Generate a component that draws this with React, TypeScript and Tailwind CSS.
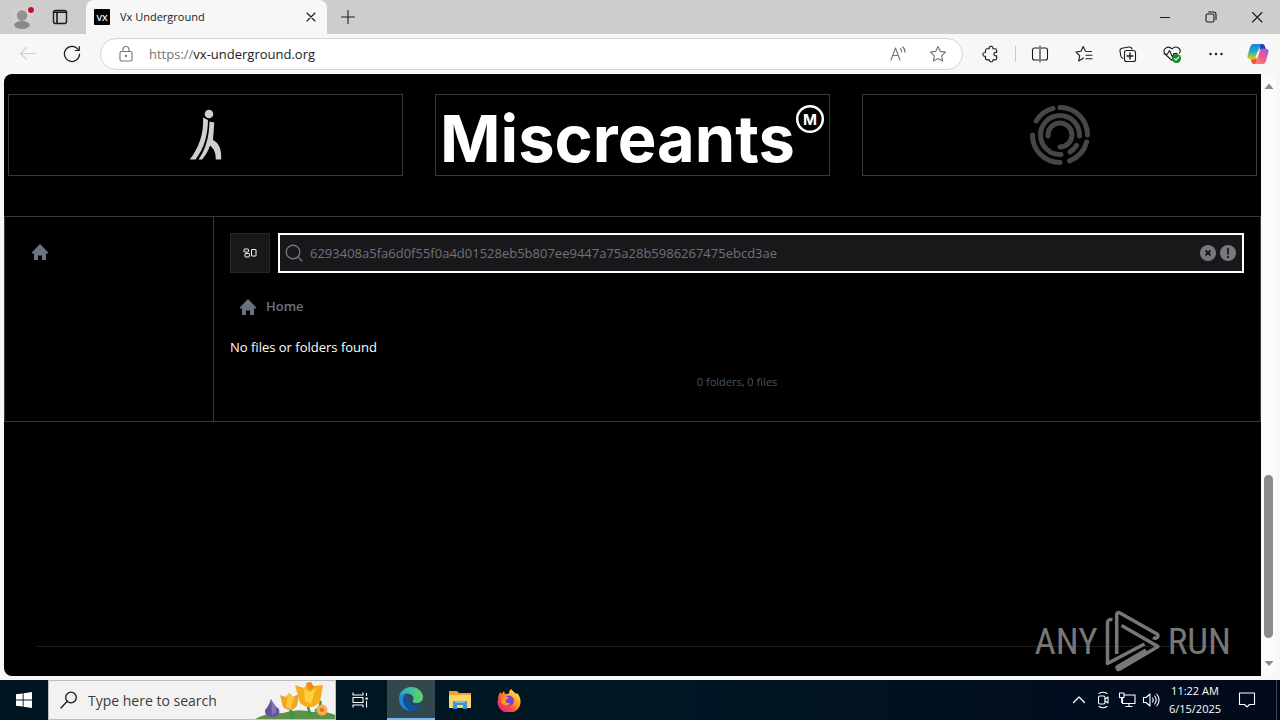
import type { ReactNode } from 'react';

type IconProps = { children: ReactNode; className?: string };

/* Base for the thin outline icons of the browser and the taskbar */
function Icon({ children, className = 'size-5' }: IconProps) {
  return (
    <svg
      viewBox="0 0 20 20"
      fill="none"
      stroke="currentColor"
      strokeWidth="1.1"
      strokeLinecap="round"
      strokeLinejoin="round"
      className={`shrink-0 ${className}`}
      aria-hidden
    >
      {children}
    </svg>
  );
}

function HomeIcon() {
  return (
    <svg viewBox="0 0 16 16" className="size-4 shrink-0 fill-gray-500" aria-hidden>
      <path d="M8 0 0 8.2V9.500h2V16h4v-4.600h4V16h4V9.500h2V8.200z" />
    </svg>
  );
}

const STAR = 'm10 2.5 2.3 4.9 5.2.7-3.8 3.7.9 5.3L10 14.6l-4.6 2.5.9-5.3-3.8-3.7 5.2-.7z';

/* ── Browser ─────────────────────────────────────────────────────────────── */

function TabStrip() {
  return (
    <header className="flex h-[34px] shrink-0 items-center bg-[#cdcdcd] text-[#1b1b1b]">
      <div className="flex w-[86px] items-center gap-3.5 pl-3">
        <button aria-label="Profile" className="size-6">
          <svg viewBox="0 0 24 24" className="size-6">
            <circle cx="10.5" cy="12" r="10.5" fill="#d3d1cf" />
            <circle cx="10" cy="10.5" r="5.2" fill="#929292" />
            <ellipse cx="10" cy="20" rx="7.8" ry="4" fill="#8a8784" />
            <circle cx="19" cy="5" r="3.8" fill="#ddd" />
            <circle cx="19" cy="5" r="3" fill="#c80f2e" />
          </svg>
        </button>
        <button aria-label="Tab actions">
          <Icon>
            <rect x="3.5" y="3.5" width="13" height="13" rx="2" strokeWidth="1.4" />
            <path d="M3.5 5.2h13M7 5v11.5" strokeWidth="1.6" />
          </Icon>
        </button>
      </div>

      <div className="flex h-[34px] w-[241px] items-center rounded-t-lg bg-[#f7f7f7] pr-1.5 pl-2">
        <svg viewBox="0 0 16 16" className="size-4 shrink-0" aria-hidden>
          <rect width="16" height="16" rx="1" fill="#000" />
          <text x="8" y="11.5" fontSize="9" fontWeight="600" textAnchor="middle" fill="#fff" fontFamily="Open Sans, sans-serif">VX</text>
        </svg>
        <span className="flex-1 pl-2.5 text-[11px]">Vx Underground</span>
        <button aria-label="Close tab">
          <Icon><path d="m6 6 8 8M14 6l-8 8" /></Icon>
        </button>
      </div>
      <button aria-label="New tab" className="pl-[11px]">
        <Icon><path d="M10 3.5v13M3.5 10h13" /></Icon>
      </button>

      <div className="ml-auto flex">
        <button aria-label="Minimize" className="flex w-[46px] justify-center">
          <Icon><path d="M5.5 10.5h9" /></Icon>
        </button>
        <button aria-label="Restore" className="flex w-[46px] justify-center">
          <Icon>
            <rect x="5" y="7" width="8" height="8" rx="1.5" />
            <path d="M7.5 5h5A2.5 2.5 0 0 1 15 7.500v5" />
          </Icon>
        </button>
        <button aria-label="Close" className="flex w-[46px] justify-center">
          <Icon><path d="m5.500 5.500 9.500 9.500M15 5.500 5.500 15" /></Icon>
        </button>
      </div>
    </header>
  );
}

function CopilotIcon() {
  return (
    <svg viewBox="0 0 24 24" className="size-6" aria-hidden>
      <defs>
        <linearGradient id="cp-a" x1="0" y1="0" x2="0" y2="1">
          <stop offset="0" stopColor="#1a80e0" />
          <stop offset="0.5" stopColor="#2aa7c0" />
          <stop offset="0.8" stopColor="#94c83d" />
          <stop offset="1" stopColor="#f5c41c" />
        </linearGradient>
        <linearGradient id="cp-b" x1="1" y1="0" x2="0" y2="1">
          <stop offset="0" stopColor="#a057e8" />
          <stop offset="0.5" stopColor="#ee5a8d" />
          <stop offset="1" stopColor="#ff9c50" />
        </linearGradient>
      </defs>
      <path d="M13 2h3.500c1.300 0 1.900.8 2.300 2l.9 3h-3.200c-1.300 0-2 .6-2.400 1.900z" fill="#1749b6" />
      <path d="M7.500 2H16c-1.500.2-2 1-2.400 2.300L10.500 15c-.5 1.600-1.300 2.200-2.700 2.200H4c-2 0-3-1.500-2.400-3.600l2.700-9C4.900 2.700 6 2 7.500 2z" fill="url(#cp-a)" />
      <path d="M11 22H7.800c-1.300 0-2-.8-2.300-2l-.8-2.800h3.100c1.500 0 2.300-.6 2.700-2.200z" fill="#f0544f" />
      <path d="M16.500 22H8c1.500-.2 2-1 2.400-2.300L13.500 9c.5-1.500 1.300-2.200 2.700-2.200H20c2 0 3 1.500 2.400 3.600l-2.700 9c-.6 1.900-1.700 2.600-3.200 2.600z" fill="url(#cp-b)" />
      <path d="m11.600 9.500 1.900-.5-2.200 6-1.900.4z" fill="#f7f7f7" />
    </svg>
  );
}

function Toolbar() {
  return (
    <div className="flex h-10 shrink-0 items-center bg-[#f7f7f7] pr-2.5 text-[#1b1b1b]">
      <div className="flex w-[100px] items-center gap-6 pl-[18px]">
        <button aria-label="Back" className="text-[#cfcfcf]">
          <Icon><path d="M17.500 9.500h-15M8.500 3.500l-6 6 6 6" /></Icon>
        </button>
        <button aria-label="Refresh">
          <Icon><path d="M16.200 5.500A7.600 7.600 0 1 0 17.600 10M17.300 2.500v4h-4" strokeWidth="1.200" /></Icon>
        </button>
      </div>

      <div className="flex h-8 flex-1 items-center rounded-full border border-[#d4d4d4] bg-white pr-3.5 pl-[15px] text-[#767676]">
        <Icon>
          <rect x="4" y="7.500" width="12" height="9.500" rx="1.500" />
          <path d="M7 7.500V5.500a3 3 0 0 1 6 0v2" />
          <circle cx="10" cy="12" r="0.600" fill="currentColor" />
        </Icon>
        <span className="flex-1 pt-0.5 pl-[13px] text-[13px]">
          https://<span className="text-[#1b1b1b]">vx-underground.org</span>
        </span>
        <button aria-label="Read aloud">
          <Icon>
            <path d="m3 16 4.500-12L12 16M4.700 11.500h5.700M12.300 4.500c1 .8 1.500 2 1.500 3.500M14.500 2.800c1.700 1.300 2.600 3 2.500 5.500" />
          </Icon>
        </button>
        <button aria-label="Add to favorites" className="ml-5">
          <Icon><path d={STAR} /></Icon>
        </button>
      </div>

      <div className="flex items-center gap-6 pl-[18px]">
        <button aria-label="Extensions">
          <Icon>
            <path d="M4.500 6.500c0-1 .7-1.700 1.700-1.700h2C7.700 3 8.700 2.300 10 2.300s2.300.8 1.900 2.500h2c1 0 1.800.8 1.800 1.700v2c-2-.4-2.800.6-2.800 1.700s1 2 2.800 1.600v2.400c0 1-.8 1.700-1.800 1.700h-2c.1 1.200-.6 1.900-1.700 1.900s-2-.7-1.900-1.900H6.200c-1 0-1.700-.7-1.700-1.700v-2c-1.800.3-2.600-.7-2.600-1.900s.9-2 2.600-1.800z" />
          </Icon>
        </button>
        <span className="-mx-2.5 h-4 w-px bg-[#c9c9c9]" />
        <button aria-label="Split screen">
          <Icon><path d="M8.500 4h-4A2 2 0 0 0 2.500 6v8a2 2 0 0 0 2 2h4M11.500 4h4a2 2 0 0 1 2 2v8a2 2 0 0 1-2 2h-4M10 2v16" /></Icon>
        </button>
        <button aria-label="Favorites">
          <Icon><path d="M9.500 14 4.700 17l1-5.300L2 8l5-.7L9.200 2.600 11.400 7.300l6.100.2M12 11.200h6M12 14.800h6" /></Icon>
        </button>
        <button aria-label="Collections">
          <Icon>
            <path d="M5 14.500C3.500 14 3 13 2.800 12L2 7c-.2-1.500.5-2.500 2-2.800L11 3c1.500-.2 2.600.5 3 2" />
            <rect x="6.500" y="6.500" width="11" height="11" rx="2" />
            <path d="M12 9v6M9 12h6" strokeWidth="1.400" />
          </Icon>
        </button>
        <button aria-label="Browser essentials">
          <Icon>
            <path d="M10 16.500 3 10C-.5 5.500 6 .5 10 5c4-4.500 10 0 7.500 4M2 10h3.500L7.500 6.500l3 6.500L12 9.500h3" />
            <circle cx="14.500" cy="14.500" r="4.500" fill="#138a2c" stroke="none" />
            <path d="m12.500 14.700 1.500 1.400 2.600-3" stroke="#fff" />
          </Icon>
        </button>
        <button aria-label="Settings and more">
          <Icon>
            <g fill="currentColor" stroke="none">
              <circle cx="4.500" cy="10" r="1.200" />
              <circle cx="10" cy="10" r="1.200" />
              <circle cx="15.500" cy="10" r="1.200" />
            </g>
          </Icon>
        </button>
        <button aria-label="Copilot" className="-ml-1"><CopilotIcon /></button>
      </div>
    </div>
  );
}

function Scrollbar() {
  return (
    <div className="flex w-[15px] shrink-0 flex-col items-center rounded-r-lg bg-[#fbfbfb] py-2 text-[#8b8b8b]" aria-hidden>
      <svg viewBox="0 0 10 8" className="h-2 w-2.5 fill-current"><path d="M5 1.500 9.500 7H.5z" /></svg>
      <div className="flex-1" />
      <div className="mb-[22px] h-[163px] w-[9px] rounded-full bg-[#8b8b8b]" />
      <svg viewBox="0 0 10 8" className="h-2 w-2.5 fill-current"><path d="M5 6 9.500 1H.5z" /></svg>
    </div>
  );
}

/* ── Page content ────────────────────────────────────────────────────────── */

function WalkerLogo() {
  return (
    <svg viewBox="0 0 34 52" className="h-[52px] w-[34px]" aria-label="Sponsor">
      <g fill="#cfcfcf">
        <circle cx="20" cy="5" r="4.300" />
        <path d="M14 8.500 19 11c-.3 15-3.500 28-12.500 39.500H.8C9.500 39.500 15 25 14 8.500z" />
        <path d="M20.500 12.500 25.300 13.500 24 31c6.500 3.500 8.500 9 8.200 19.500h-5.500c.2-7-1.700-10.500-5.700-14-2 6-4.500 10-8 14H9.500C17 40 20.200 27 20.500 12.500z" />
      </g>
    </svg>
  );
}

function MiscreantsLogo() {
  return (
    <div className="flex items-start">
      <span className="pt-2 font-[Inter,sans-serif] text-[65px] leading-[70px] font-bold text-white">Miscreants</span>
      <svg viewBox="0 0 30 30" className="mt-2 size-[30px] shrink-0" aria-hidden>
        <circle cx="15" cy="15" r="12.800" fill="none" stroke="#fff" strokeWidth="2.500" />
        <text x="15" y="20.500" fontSize="15" fontWeight="700" textAnchor="middle" fill="#fff" fontFamily="Inter, sans-serif">M</text>
      </svg>
    </div>
  );
}

function RingsLogo() {
  return (
    <svg viewBox="-31 -31 62 62" className="size-[62px]" fill="none" stroke="#464646" strokeWidth="5" strokeLinecap="round" aria-label="Sponsor">
      <path d="M-23.800-14A27.500 27.500 0 0 1-7-26.600" />
      <path d="M0-27.500A27.500 27.500 0 0 1 27.500 0" />
      <path d="M-27.500 0A27.500 27.500 0 0 0 0 27.500" />
      <path d="M9.500 25.800A27.500 27.500 0 0 0 26.600 7" />
      <path d="M1 19.500A19.500 19.500 0 1 1 19.500 1" />
      <path d="M10 17A19.500 19.500 0 0 0 16.500 10.500" />
      <path d="M-12 1A12 12 0 1 1 0 12" />
    </svg>
  );
}

function FilesPanel() {
  return (
    <section className="mt-10 flex border border-[#393939]">
      <aside className="w-[209px] shrink-0 border-r border-[#393939] px-[27px] py-[27px]">
        <a href="#home" aria-label="Home"><HomeIcon /></a>
      </aside>

      <div className="flex-1 px-4 pt-4 pb-[29px]">
        <div className="flex gap-2">
          <button aria-label="Change view" className="flex size-10 items-center justify-center border border-zinc-800 bg-zinc-900 text-white">
            <svg viewBox="0 0 14 10" className="h-2.5 w-3.5" fill="none" stroke="currentColor" aria-hidden>
              <rect x="1" y="1" width="4.500" height="3" rx="0.800" />
              <rect x="2" y="5.500" width="4.500" height="3.500" rx="0.800" />
              <rect x="8.500" y="1.500" width="4.500" height="6.500" rx="0.500" />
            </svg>
          </button>
          <label className="flex h-10 flex-1 items-center border-2 border-white bg-zinc-900 pr-1.5 pl-1 text-zinc-500">
            <Icon>
              <circle cx="9" cy="9" r="6.800" strokeWidth="1.400" />
              <path d="m14 14 4 4" strokeWidth="1.400" />
            </Icon>
            <input
              type="text"
              aria-label="Search files"
              defaultValue="6293408a5fa6d0f55f0a4d01528eb5b807ee9447a75a28b5986267475ebcd3ae"
              className="min-w-0 flex-1 bg-transparent pt-0.5 pl-1.5 text-[13px] outline-none"
            />
            <svg viewBox="0 0 36 16" className="h-4 w-9" aria-hidden>
              <circle cx="8" cy="8" r="8" fill="#77777d" />
              <path d="m5.500 5.500 5 5M10.500 5.500l-5 5" stroke="#18181b" strokeWidth="1.800" />
              <circle cx="28" cy="8" r="8" fill="#77777d" />
              <path d="M28 3v6.500M28 11v2" stroke="#18181b" strokeWidth="1.800" />
            </svg>
          </label>
        </div>

        <nav className="mt-3.5 flex h-10 items-center px-2.5">
          <a href="#home" className="flex items-center gap-2.5 text-[13px] font-semibold text-gray-500">
            <HomeIcon />
            Home
          </a>
        </nav>
        <p className="mt-2 text-[13px] leading-6 text-white">No files or folders found</p>
        <p className="mt-[13px] text-center text-[11px] leading-5 text-gray-600">0 folders, 0 files</p>
      </div>
    </section>
  );
}

/* Overlay in the corner of the screen */
function Watermark() {
  return (
    <div className="absolute right-[30px] bottom-1 flex items-center gap-[7px] font-['Roboto_Condensed','Liberation_Sans_Narrow','Liberation_Sans',sans-serif] text-[37px] leading-none text-[#777]">
      <span>ANY</span>
      <svg viewBox="0 0 56 62" className="h-[62px] w-14" fill="none" stroke="currentColor" strokeWidth="3.500" strokeLinejoin="round" strokeLinecap="round" aria-hidden>
        <path d="M7.500 9.500Q2.500 9 2.500 13V53.500L39.500 34" strokeLinecap="butt" />
        <path d="M11.700 44V5Q11.700 1.500 15 3L52 24q2 2 0 3.500-1.500 1.500-4 0" strokeLinecap="butt" />
        <path d="M16.500 15.500 53 36.500 15 59q-3 1.500-3-2L41 40" strokeLinecap="butt" />
      </svg>
      <span>RUN</span>
    </div>
  );
}

/* ── Taskbar ─────────────────────────────────────────────────────────────── */

function Flowers() {
  return (
    <svg viewBox="0 0 80 38" className="h-[38px] w-20 shrink-0" aria-hidden>
      <path d="M0 38Q12 31 28 32 42 27 58 31 70 29 80 34V38z" fill="#5b9148" />
      <path d="M38 38Q37 32 34 25M55 33Q52 25 53 17M60 30q7-4 5-10" stroke="#349346" strokeWidth="2.500" fill="none" />
      <path d="M16 18q-2 7-6 11-1 7 8 7 8-1 6-8-5-3-8-10z" fill="#65529c" />
      <path d="m16 18 1 16q6-3 4-8z" fill="#8873ba" />
      <path d="M25 14l6 2 3-4 4 4 6-3-2 12q-7 8-14 1z" fill="#f2a51f" />
      <path d="m33 13-2 13 5 2 3-11z" fill="#ffc83a" />
      <path d="M40 4l9 3 4-5 5 3 10-1-3 17q-10 10-20 1z" fill="#f6ad19" />
      <path d="M49 7l1 13 6 3 5-16-6 4z" fill="#ffd13f" />
      <path d="m51 2 5-1 3 5-5 4z" fill="#ef8620" />
      <circle cx="67" cy="29" r="5.500" fill="#f9ae4b" />
      <circle cx="67" cy="29" r="2" fill="#dc6822" />
    </svg>
  );
}

function EdgeIcon() {
  return (
    <svg viewBox="0 0 24 24" className="size-6" aria-hidden>
      <defs>
        <linearGradient id="edge-top" x1="0" y1="0.500" x2="1" y2="0.500">
          <stop offset="0" stopColor="#27a5e2" />
          <stop offset="1" stopColor="#5ed85b" />
        </linearGradient>
      </defs>
      <path d="M0 11C1 4 6 0 12 0c7 0 12 5 12 10 0 4-3 6-7 6-3 0-4-1-3-2.500C16 10 12 6 7 6.500 4 7 1 9 0 11z" fill="url(#edge-top)" />
      <path d="M0 12c0-4 4-6 7-5.500-3 3-4 7-2 11 2 3 5 5.500 8 6.300C6 24.500 0 19 0 12z" fill="#1689d8" />
      <path d="M10 9c-3 1-5 4-4.500 7.500C6 21 10 24 14 23.700c4-.5 7-3 8.500-5.700-5 3-13 1.500-12.500-9z" fill="#0c53a5" />
    </svg>
  );
}

function FolderIcon() {
  return (
    <svg viewBox="0 0 24 20" className="h-5 w-6" aria-hidden>
      <path d="M1 1h8l2 2h12v15H1z" fill="#e9a52a" />
      <path d="M1 5h22v13H1z" fill="#f9d567" />
      <path d="M5 11h14v8h-4v-4H9v4H5z" fill="#3793d5" />
      <path d="M7 11h10v2H7z" fill="#72c0ed" />
    </svg>
  );
}

function FirefoxIcon() {
  return (
    <svg viewBox="0 0 24 24" className="size-6" aria-hidden>
      <defs>
        <linearGradient id="ff" x1="0.900" y1="0.100" x2="0.200" y2="0.900">
          <stop offset="0" stopColor="#fff14b" />
          <stop offset="0.400" stopColor="#ff9a24" />
          <stop offset="0.700" stopColor="#ff4b40" />
          <stop offset="1" stopColor="#e9277b" />
        </linearGradient>
      </defs>
      <path d="M14 1c1 2 4 3 5 5l1-1c2 2 3.500 5 3.500 8A11.500 11 0 1 1 1 11c0-3 1-5 2.500-7l1 2L7 3l1 3 4-.5C12 4 12.500 2 14 1z" fill="url(#ff)" />
      <circle cx="12" cy="12.800" r="5" fill="#7444d9" />
      <path d="M5 9c3-1 5 0 7 .8-1 1.500-3 1-3.500 3 .5 2 3 3 5 2-2 4-8 3-9.500-1z" fill="#ff9623" />
    </svg>
  );
}

function Taskbar() {
  return (
    <footer className="flex h-10 shrink-0 items-center bg-linear-to-r from-[#00151f] via-[#001724] to-[#02091b] text-white">
      <button aria-label="Start" className="flex w-12 justify-center">
        <svg viewBox="0 0 16 16" className="size-4 fill-white">
          <path d="M0 2.300 6.700 1.400V7.500H0zM7.600 1.200 16 0v7.500H7.600zM0 8.500h6.700v6.100L0 13.700zM7.600 8.500H16V16l-8.400-1.200z" />
        </svg>
      </button>
      <label className="flex h-10 w-72 items-center border border-[#bdbdbd] bg-[#f2f2f2] text-[#1b1b1b]">
        <Icon className="ml-2.5 size-5">
          <circle cx="12" cy="7.500" r="5.300" strokeWidth="1.300" />
          <path d="M8 11.500 2 18" strokeWidth="1.300" />
        </Icon>
        <input
          type="text"
          aria-label="Search"
          placeholder="Type here to search"
          className="h-full min-w-0 flex-1 bg-transparent pl-[9px] text-[14px] outline-none placeholder:text-[#3b3b3b]"
        />
        <Flowers />
      </label>
      <button aria-label="Task view" className="flex w-[51px] justify-center pr-1">
        <Icon>
          <path d="M3 2.500v2.500h10V2.500M3 17.500V15h10v2.500M3 7.500h10v5H3zM16.500 3v3M16.500 11v6.500" strokeLinecap="butt" />
          <path d="M15.500 7.500h2.200v2.200h-2.200z" fill="currentColor" stroke="none" />
        </Icon>
      </button>
      <button aria-label="Microsoft Edge" className="flex h-10 w-12 items-center justify-center border-b-2 border-[#76b9ed] bg-[#33474f]">
        <EdgeIcon />
      </button>
      <button aria-label="File Explorer" className="flex w-[49px] justify-center"><FolderIcon /></button>
      <button aria-label="Firefox" className="flex w-[49px] justify-center"><FirefoxIcon /></button>

      <div className="ml-auto flex items-center">
        <div className="flex gap-1">
          <Icon><path d="m4.500 12.500 5.500-5.500 5.500 5.500" strokeWidth="1.300" /></Icon>
          <Icon>
            <rect x="5.500" y="6" width="6.500" height="8" rx="1.500" />
            <path d="m12 9 3-2v6l-3-2M6 3.500q4-2.500 8 0M6 16.500q4 2.500 8 0" />
          </Icon>
          <Icon>
            <path d="M7 5h11v8.500H5.500V8M12 13.500V16M8.500 16.500h7M2.500 3h4.500v4.500H2.500zM4.700 7.500V13" strokeLinecap="butt" />
          </Icon>
          <Icon>
            <path d="M2.500 7.500H5l4-3.500v12l-4-3.500H2.500zM11.500 8q1.500 2 0 4M13.700 6q3 4 0 8M15.800 4q4.500 6 0 12" />
          </Icon>
        </div>
        <div className="w-[68px] text-center text-[11px] leading-[18px]">
          <div>11:22 AM</div>
          <div>6/15/2025</div>
        </div>
        <button aria-label="Notifications" className="flex w-9 justify-center">
          <Icon><path d="M2.500 3h15v11.500h-5L10 17l-2.500-2.500h-5z" /></Icon>
        </button>
        <span className="ml-[11px] h-10 w-1 border-l border-[#3f4552]" />
      </div>
    </footer>
  );
}

export default function App() {
  return (
    <div className="flex h-screen flex-col overflow-hidden bg-[#f7f7f7] font-['Open_Sans',sans-serif]">
      <TabStrip />
      <Toolbar />

      <main className="mb-1 flex min-h-0 flex-1 pr-1 pl-1">
        <div className="relative flex flex-1 flex-col overflow-hidden rounded-l-lg bg-black">
          <div className="grid grid-cols-3 gap-8 px-1 pt-5">
            <a href="#sponsor-1" className="flex h-[82px] items-center justify-center border border-[#393939]"><WalkerLogo /></a>
            <a href="#sponsor-2" className="flex h-[82px] min-w-0 items-center justify-center border border-[#393939]"><MiscreantsLogo /></a>
            <a href="#sponsor-3" className="flex h-[82px] items-center justify-center border border-[#393939]"><RingsLogo /></a>
          </div>
          <FilesPanel />
          <hr className="mx-8 mt-auto mb-[29px] border-[#1d1d1d]" />
          <Watermark />
        </div>
        <Scrollbar />
      </main>

      <Taskbar />
    </div>
  );
}
